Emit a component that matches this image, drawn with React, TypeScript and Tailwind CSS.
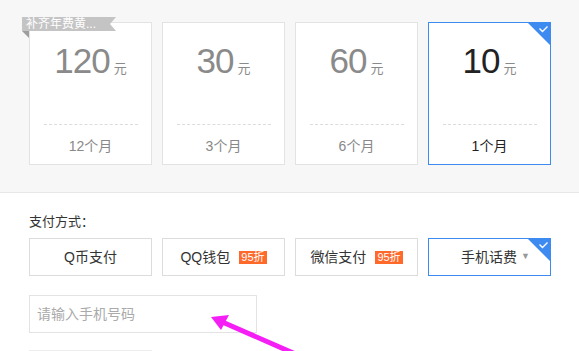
import React from "react";

const PLANS = [
  { price: "120", label: "12个月", tag: "补齐年费黄..." },
  { price: "30", label: "3个月" },
  { price: "60", label: "6个月" },
  { price: "10", label: "1个月", active: true },
];

const PAYS = [
  { name: "Q币支付" },
  { name: "QQ钱包", badge: "95折" },
  { name: "微信支付", badge: "95折" },
  { name: "手机话费", active: true, caret: true },
];

function Corner() {
  return (
    <svg className="absolute -top-px -right-px" width="24" height="24" viewBox="0 0 24 24">
      <polygon points="0,0 24,0 24,24" fill="#3d8af0" />
      <path d="M12.5 6.5 L15.5 9.5 L20.5 4.5" stroke="#fff" strokeWidth="1.4" fill="none" />
    </svg>
  );
}

export default function App() {
  return (
    <div className="w-[579px] h-[351px] overflow-hidden bg-white relative" style={{ fontFamily: '"Liberation Sans", "Noto Sans CJK SC", sans-serif' }}>
      {/* 套餐 */}
      <div className="h-[193px] bg-[#f7f7f7] border-b border-[#e8e8e8] pt-[22px] pl-[29px]">
        <div className="flex gap-[10px]">
          {PLANS.map((p) => (
            <div
              key={p.price}
              className={`relative w-[123px] h-[143px] bg-white border flex flex-col items-center ${p.active ? "border-[#3d8af0]" : "border-[#e3e3e3]"}`}
            >
              {p.tag && (
                <div className="absolute -top-[6px] -left-[8px]">
                  <svg width="94" height="22" viewBox="0 0 94 22" className="absolute top-0 left-0">
                    <polygon points="0,0 94,0 88,7 94,14 0,14" fill="#c4c4c4" />
                    <polygon points="0,14 7,14 7,21" fill="#9e9e9e" />
                  </svg>
                  <span className="relative block pl-[4px] text-[12px] leading-[14px] text-white whitespace-nowrap">{p.tag}</span>
                </div>
              )}
              {p.active && <Corner />}
              <div className="mt-[16px] flex items-baseline">
                <span className={`text-[35px] leading-[44px] tracking-[-1px] ${p.active ? "text-[#222]" : "text-[#8a8a8a]"}`}>{p.price}</span>
                <span className="ml-[4px] text-[13px] text-[#8a8a8a]">元</span>
              </div>
              <div className="mt-[41px] w-[94px] border-t border-dashed border-[#dcdcdc]" />
              <div className={`mt-[11px] text-[14px] ${p.active ? "text-[#222]" : "text-[#888]"}`}>{p.label}</div>
            </div>
          ))}
        </div>
      </div>

      {/* 支付方式 */}
      <div className="pl-[29px]">
        <div className="mt-[20px] text-[13px] leading-[18px] text-[#333]">支付方式：</div>
        <div className="mt-[7px] flex gap-[10px]">
          {PAYS.map((p) => (
            <div
              key={p.name}
              className={`relative w-[123px] h-[38px] border flex items-center justify-center text-[14px] text-[#333] ${p.active ? "border-[#3d8af0]" : "border-[#dcdcdc]"}`}
            >
              {p.active && <Corner />}
              <span className={p.caret ? "ml-[12px]" : ""}>{p.name}</span>
              {p.badge && (
                <span className="ml-[9px] px-[2px] bg-[#ff6a2b] text-white text-[11px] leading-[13px]">{p.badge}</span>
              )}
              {p.caret && <span className="ml-[4px] text-[#999] text-[9px]">▼</span>}
            </div>
          ))}
        </div>
        <div className="mt-[19px] w-[228px] h-[38px] border border-[#e3e3e3] flex items-center pl-[7px] text-[14px] text-[#aaa]">
          请输入手机号码
        </div>
        <div className="mt-[17px] w-[123px] border-t border-[#eee]" />
      </div>

      {/* 箭头 */}
      <svg className="absolute left-0 top-0 pointer-events-none" width="579" height="351" viewBox="0 0 579 351">
        <line x1="220" y1="321" x2="300" y2="356" stroke="#f51ff5" strokeWidth="5" />
        <polygon points="211,317 229,315 221,330" fill="#f51ff5" />
      </svg>
    </div>
  );
}
